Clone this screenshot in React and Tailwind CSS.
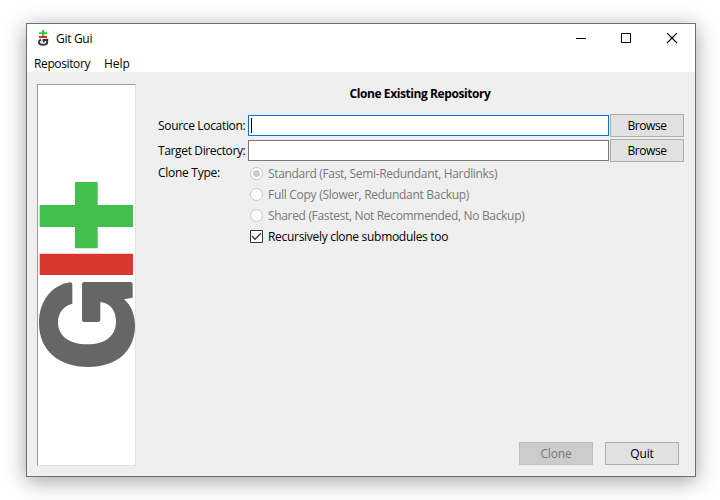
import React from "react";

function GitBanner() {
  return (
    <div className="h-[382px] w-[99px] shrink-0 border border-t-[#999] border-r-[#e3e3e3] border-b-[#e3e3e3] border-l-[#999] bg-white">
      <svg width="97" height="380" viewBox="36 -255 291 1140" className="block">
        <path d="M147 36H215V105H321V171H215V235H147V171H41V105H147Z" fill="#42bf4c" />
        <path d="M41 251H321V315H41Z" fill="#d9382f" />
        <path
          d="M132 337Q139 337 139 345V401C112 408 96 429 96 457C96 499 130 523 184 523C238 523 270 499 270 454C270 421 253 399 223 396V449Q223 456 216 456H175Q168 456 168 449V343Q168 336 175 336H313Q320 336 320 343V383L294 388C316 407 327 435 327 468C327 543 272 591 187 591C99 591 39 541 39 459C39 394 77 345 132 337Z"
          fill="#666"
        />
      </svg>
    </div>
  );
}

function GitIcon() {
  return (
    <svg width="11" height="16" viewBox="0 0 11 16" className="mb-[3px] block">
      <path d="M4 0H6.3V2.3H9V4H6.3V6H4V4H1V2.3H4Z" fill="#32cd32" />
      <path d="M1 6H9V8H1Z" fill="#d9302f" />
      <path
        d="M3 9.7C1.3 10.2 1 11.2 1 12C1 13.8 2.6 14.8 5 14.8C7.6 14.8 9.2 13.8 9.2 12C9.2 11.2 9 10.6 8.5 10H5.6V12.4"
        fill="none"
        stroke="#333638"
        strokeWidth="2"
      />
      <path d="M8 8.8H10.3V10.6H8Z" fill="#333638" />
    </svg>
  );
}

function Button({ children, disabled, spacing = "" }) {
  return (
    <button
      disabled={disabled}
      className={
        "flex h-[23px] w-[74px] shrink-0 items-center justify-center border pt-px " +
        (disabled ? "border-[#bfbfbf] bg-[#ccc] text-[#787878] " : "border-[#adadad] bg-[#e1e1e1] ") +
        spacing
      }
    >
      {children}
    </button>
  );
}

function Field({ label, spacing, focused }) {
  return (
    <div className="flex h-[25px] items-center">
      <span className={"w-[90px] shrink-0 whitespace-nowrap pt-px " + spacing}>{label}</span>
      <div
        className={
          "mr-px flex h-[21px] w-[361px] shrink-0 items-center border bg-white pl-[2px] " +
          (focused ? "border-[#0078d7]" : "border-[#7a7a7a]")
        }
      >
        {focused && <span className="h-[15px] w-px bg-black" />}
      </div>
      <Button spacing="tracking-[-0.4px]">Browse</Button>
    </div>
  );
}

function Radio({ label, selected, spacing }) {
  return (
    <div className="flex h-[21px] items-center text-[#787878]">
      <span className="mr-[5px] flex size-[13px] items-center justify-center rounded-full border border-[#c6c6c6] bg-white">
        {selected && <span className="size-[7px] rounded-full bg-[#ccc]" />}
      </span>
      <span className={"whitespace-nowrap " + spacing}>{label}</span>
    </div>
  );
}

export default function App() {
  return (
    <div className="h-[500px] w-[720px] overflow-hidden bg-white pt-[23px] pl-[26px] font-['Open_Sans','Noto_Sans',sans-serif] text-[12px] leading-[16px] text-black">
      <div className="flex h-[454px] w-[670px] flex-col border border-[#707070] bg-white shadow-[0_4px_20px_rgba(0,0,0,0.38)]">
        <header className="flex h-[31px] shrink-0 items-center pl-[11px]">
          <GitIcon />
          <span className="ml-[7px] pb-px tracking-[-0.3px]">Git Gui</span>
          <svg width="102" height="11" viewBox="0 0 102 11" fill="none" stroke="#000" className="mr-[17px] mb-[2px] ml-auto block">
            <path d="M0 5.5H10M45.5 .5H54.5V9.5H45.5Z" />
            <path d="M91 0L101 10M101 0L91 10" strokeWidth="1.2" />
          </svg>
        </header>
        <nav className="flex h-[17px] shrink-0 items-center gap-[14px] pl-[7px]">
          <span className="tracking-[-0.38px]">Repository</span>
          <span className="tracking-[-0.1px]">Help</span>
        </nav>
        <main className="flex grow bg-[#efefef] pt-[12px] pl-[10px]">
          <GitBanner />
          <section className="ml-[22px] flex h-[381px] w-[526px] flex-col">
            <h1 className="mt-[2px] pr-[2px] text-center text-[12px] font-bold tracking-[-0.42px]">Clone Existing Repository</h1>
            <div className="mt-[11px]">
              <Field label="Source Location:" spacing="tracking-[-0.33px]" focused />
              <Field label="Target Directory:" spacing="tracking-[-0.36px]" />
            </div>
            <div className="flex">
              <span className="mt-[2px] w-[92px] shrink-0 tracking-[-0.28px]">Clone Type:</span>
              <div>
                <Radio label="Standard (Fast, Semi-Redundant, Hardlinks)" spacing="tracking-[-0.33px]" selected />
                <Radio label="Full Copy (Slower, Redundant Backup)" spacing="tracking-[-0.28px]" />
                <Radio label="Shared (Fastest, Not Recommended, No Backup)" spacing="tracking-[-0.33px]" />
                <div className="flex h-[21px] items-center">
                  <svg width="13" height="13" viewBox="0 0 13 13" className="mr-[5px] block">
                    <path d="M.5 .5H12.5V12.5H.5Z" fill="#fff" stroke="#333" />
                    <path d="M2 6L5 9.2L11 3.2" fill="none" stroke="#333" strokeWidth="1.3" />
                  </svg>
                  <span className="tracking-[-0.3px]">Recursively clone submodules too</span>
                </div>
              </div>
            </div>
            <div className="mt-auto mr-[5px] flex justify-end gap-[12px]">
              <Button disabled spacing="tracking-[-0.15px]">Clone</Button>
              <Button spacing="tracking-[-0.15px]">Quit</Button>
            </div>
          </section>
        </main>
      </div>
    </div>
  );
}
